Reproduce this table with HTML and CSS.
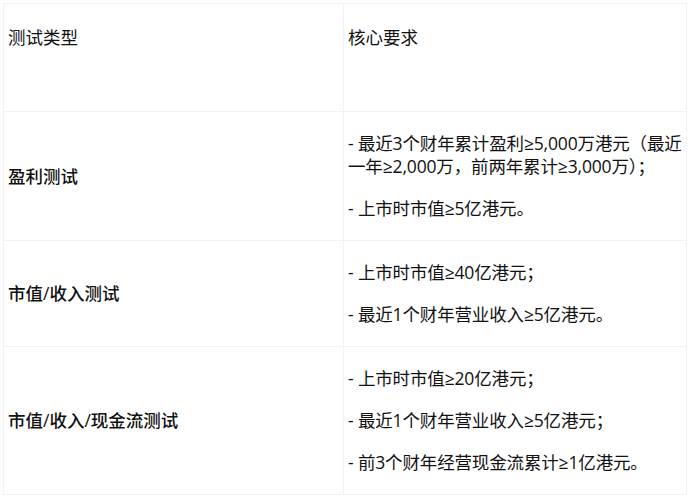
FILE: index.html
```html
<!DOCTYPE html>
<html lang="zh-CN">
<head>
<meta charset="utf-8">
<link rel="stylesheet" href="styles.css">
</head>
<body>
<table class="req-table">
  <colgroup><col class="col-type"><col class="col-req"></colgroup>
  <thead>
    <tr class="head-row">
      <th>测试类型</th>
      <th>核心要求</th>
    </tr>
  </thead>
  <tbody>
    <tr class="row-profit">
      <td class="type">盈利测试</td>
      <td class="req">
        <p>- 最近3个财年累计盈利≥5,000万港元（最近一年≥2,000万，前两年累计≥3,000万）；</p>
        <p>- 上市时市值≥5亿港元。</p>
      </td>
    </tr>
    <tr class="row-rev">
      <td class="type">市值/收入测试</td>
      <td class="req">
        <p>- 上市时市值≥40亿港元；</p>
        <p>- 最近1个财年营业收入≥5亿港元。</p>
      </td>
    </tr>
    <tr class="row-cash">
      <td class="type">市值/收入/现金流测试</td>
      <td class="req">
        <p>- 上市时市值≥20亿港元；</p>
        <p>- 最近1个财年营业收入≥5亿港元；</p>
        <p>- 前3个财年经营现金流累计≥1亿港元。</p>
      </td>
    </tr>
  </tbody>
</table>
</body>
</html>
```
FILE: styles.css
```css
html, body {
  margin: 0;
  padding: 0;
  background: #ffffff;
}
body {
  font-family: "Open Sans", "Noto Sans CJK SC", sans-serif;
  font-size: 17.5px;
  line-height: 23px;
  color: #111111;
}
.req-table {
  margin: 3px 0 0 3px;
  width: 683px;
  border-collapse: collapse;
  table-layout: fixed;
}
.col-type { width: 340px; }
.col-req { width: 343px; }
.req-table th,
.req-table td {
  border: 1px solid #f2f2f2;
  padding: 20px 0 20px 4px;
  text-align: left;
  vertical-align: middle;
}
.req-table th {
  font-weight: normal;
  vertical-align: top;
  height: 65px;
  padding-top: 22px;
}
.type {
  font-weight: 500;
}
.req p {
  margin: 0;
  letter-spacing: -0.15px;
}
.req p + p {
  margin-top: 19px;
}
```
